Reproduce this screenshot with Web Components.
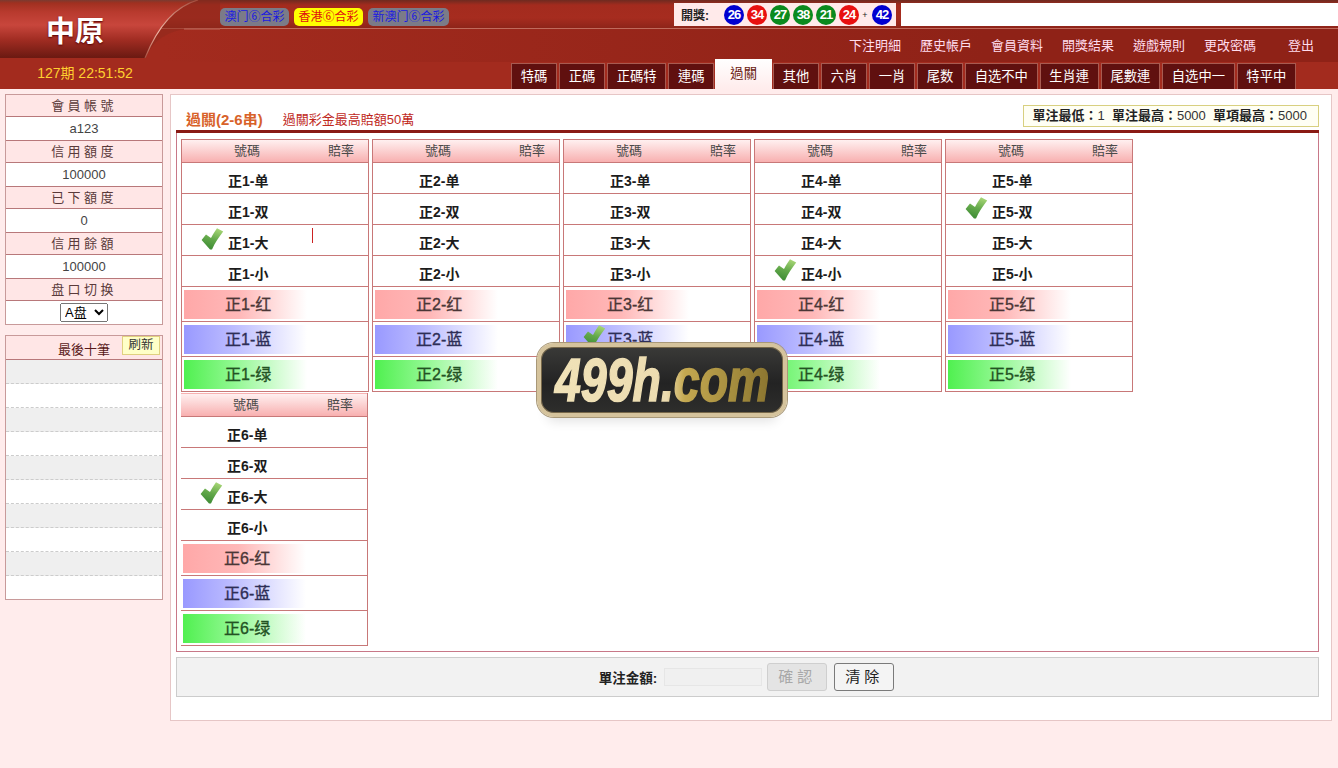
<!DOCTYPE html>
<html lang="zh-Hant"><head><meta charset="utf-8"><title>過關</title>
<style>
html,body{margin:0;padding:0;background:#ffecec;font-family:"Liberation Sans","Noto Sans CJK TC","Noto Sans CJK SC",sans-serif;font-size:13px;color:#333}
body{width:1338px;height:768px;overflow:hidden;position:relative}
</style></head><body>
<app-header></app-header>
<div style="display:flex;padding:5px 0 0 5px;gap:7px;align-items:flex-start">
<side-bar></side-bar>
<main-panel></main-panel>
</div>
<logo-mark></logo-mark>
<script>
const FONT='"Liberation Sans","Noto Sans CJK TC","Noto Sans CJK SC",sans-serif';
function el(name,html){customElements.define(name,class extends HTMLElement{constructor(){super();this.attachShadow({mode:'open'}).innerHTML=typeof html==='function'?html(this):html;}});}

el('lottery-pill',`<style>:host{display:block;height:18px;line-height:18px;padding:0 4.5px;border-radius:5px;background:#7b7b88;color:#1a1ae0;font-size:12px;white-space:nowrap}
:host([on]){background:#ffff00;color:#e01010}</style><slot></slot>`);

el('num-ball',`<style>:host{display:block;width:20px;height:20px;margin-right:3px;border-radius:50%;background:#0000d0;color:#fff;font:bold 13px/20px ${FONT};letter-spacing:-1px;text-align:center;flex:none}
:host([c=r]){background:#e81010}:host([c=g]){background:#0a8a1e}</style><slot></slot>`);

el('tab-item',`<style>:host{display:block;height:26px;line-height:27px;margin-top:1px;padding:0 9.7px;background:#60100f;color:#fff;font-size:13.3px;white-space:nowrap;box-shadow:inset 1px 0 0 #a85a50,inset -1px 0 0 #a85a50,inset 0 1px 0 #a85a50}
:host([on]){height:30px;margin:-3px -1px 0;line-height:30px;background:linear-gradient(#fff,#ffecec);color:#6a1a10;padding:0 15.2px;box-shadow:none}</style><slot></slot>`);

el('app-header',`<style>
:host{display:block;height:89px;position:relative;background:#a32b1e;color:#fff}
.wrap{display:flex;height:89px}
.left{width:160px;flex:none;position:relative}
.brand{height:58px;width:146px;background:linear-gradient(#7a3a30 0,#a03020 3px,#b83a2e 12px,#c8463c 25px,#a02c22 40px,#6d1a12 57px);display:flex;align-items:center;justify-content:center;box-sizing:border-box;font:bold 29px "Noto Sans CJK TC",sans-serif;text-shadow:0 1px 2px #500;padding:0 0 1px 4px}
.time{height:31px;line-height:31px;text-align:center;color:#ffd030;font-size:14px;width:170px}
.swoosh{position:absolute;left:140px;top:0;width:80px;height:58px}
.right{flex:1;min-width:0;display:flex;flex-direction:column}
.top{height:29px;box-sizing:border-box;padding-top:8px;display:flex;background:linear-gradient(#6e2a20,#a32b1e 5px,#a62c1f 18px,#8e2419);border-bottom:1px solid #c06a5c;position:relative}
.pills{display:flex;gap:5px;margin-left:60px;position:relative}
.draw{position:absolute;left:514px;top:3px;width:222px;height:23px;background:#ffeaea;display:flex;align-items:center;box-sizing:border-box;padding-left:7px;color:#222;font-weight:bold;font-size:12px}
.draw span{width:43px;white-space:nowrap;flex:none}
.draw i{font:normal 9px sans-serif;margin:0 3px 0 -1px;width:8px;text-align:center;flex:none}
.search{position:absolute;left:741px;right:0;top:3px;height:23px;background:#fff}
.links{height:33px;box-sizing:border-box;display:flex;justify-content:flex-end;align-items:center;padding:0 24px 2px 0;gap:19px;font-size:13px;background:linear-gradient(90deg,#a32b1e,#8f2217 70%,#8f2217);color:#fde}
.links span:last-child{margin-left:13px}
.tabs{height:27px;display:flex;gap:2px;padding-left:351px;align-items:flex-start}
</style>
<div class="wrap">
 <div class="left">
  <div class="brand">中原</div>
  <div class="time">127期 22:51:52</div>
 </div>
 <div class="right">
  <div class="top">
   <div class="pills"><lottery-pill>澳门⑥合彩</lottery-pill><lottery-pill on>香港⑥合彩</lottery-pill><lottery-pill>新澳门⑥合彩</lottery-pill></div>
   <div class="draw"><span>開獎:</span>
    <num-ball>26</num-ball><num-ball c=r>34</num-ball><num-ball c=g>27</num-ball><num-ball c=g>38</num-ball><num-ball c=g>21</num-ball><num-ball c=r>24</num-ball><i>+</i><num-ball>42</num-ball></div>
   <div class="search"></div>
  </div>
  <div class="links"><span>下注明細</span><span>歷史帳戶</span><span>會員資料</span><span>開獎結果</span><span>遊戲規則</span><span>更改密碼</span><span>登出</span></div>
  <div class="tabs"><tab-item>特碼</tab-item><tab-item>正碼</tab-item><tab-item>正碼特</tab-item><tab-item>連碼</tab-item><tab-item on>過關</tab-item><tab-item>其他</tab-item><tab-item>六肖</tab-item><tab-item>一肖</tab-item><tab-item>尾数</tab-item><tab-item>自选不中</tab-item><tab-item>生肖連</tab-item><tab-item>尾數連</tab-item><tab-item>自选中一</tab-item><tab-item>特平中</tab-item></div>
 </div>
</div>
<svg class="swoosh" viewBox="0 0 80 58"><defs>
<linearGradient id="b" x1="0" y1="0" x2="0" y2="1"><stop offset="0" stop-color="#7a3a30"/><stop offset=".05" stop-color="#a03020"/><stop offset=".21" stop-color="#b83a2e"/><stop offset=".43" stop-color="#c8463c"/><stop offset=".7" stop-color="#a02c22"/><stop offset="1" stop-color="#6d1a12"/></linearGradient>
<linearGradient id="l" x1="0" y1="1" x2="1" y2="0"><stop offset="0" stop-color="#a85040"/><stop offset=".35" stop-color="#f0b8a8"/><stop offset="1" stop-color="#a0493a"/></linearGradient></defs>
<path d="M5 58C11 46 22 31 48 29H80V0H50C32 6 18 26 5 58Z" fill="#8f2a1e" opacity=".55"/>
<path d="M0 0H58C36 6 18 26 5 58H0Z" fill="url(#b)"/>
<path d="M5 58C18 26 36 6 58 0" fill="none" stroke="url(#l)" stroke-width="1.2"/>
<path d="M44 29H80" stroke="#c06a5c" stroke-width="1"/></svg>`);

el('info-row',h=>`<style>:host{display:block}.k{height:21px;line-height:22px;text-align:center;background:#ffe6e6;color:#5a3a3a;letter-spacing:3.4px;font-size:13px;border-bottom:1px solid #b8787a}
.v{height:23px;line-height:23px;text-align:center;background:#fff;color:#444;font-size:13px;border-bottom:1px solid #b8787a}:host(:last-child) .v{border-bottom:0}</style>
<div class="k">${h.getAttribute('k')}</div><div class="v"><slot></slot></div>`);

el('side-bar',`<style>:host{display:block;width:158px;flex:none}
.box{border:1px solid #c89a9a;background:#fff}
.recent{margin-top:10px}
.rh{height:23px;line-height:27px;background:#ffe6e6;border-bottom:1px solid #b8787a;text-align:center;position:relative;color:#5a1a1a;font-size:13px;padding-right:0}
.rb{position:absolute;right:2px;top:0;height:19px;width:38px;box-sizing:border-box;line-height:17px;font-size:12.5px;background:#ffffc8;border:1px solid #e0d080;color:#333}
.r{height:23px;border-bottom:1px dashed #ccc}.r:nth-child(odd){background:#efefef}.r:last-child{border-bottom:0}
select{font:13px ${FONT};height:19px;width:48px;padding:0;display:block;margin:0 auto;position:relative;top:2px}
</style>
<div class="box">
<info-row k="會員帳號">a123</info-row><info-row k="信用額度">100000</info-row><info-row k="已下額度">0</info-row><info-row k="信用餘額">100000</info-row><info-row k="盘口切换"><select><option>A盘</option></select></info-row>
</div>
<div class="box recent"><div class="rh">最後十筆<span class="rb">刷新</span></div><div>
<div class="r"></div><div class="r"></div><div class="r"></div><div class="r"></div><div class="r"></div><div class="r"></div><div class="r"></div><div class="r"></div><div class="r"></div><div class="r"></div></div></div>`);

el('check-mark',`<style>:host{display:block;position:absolute;width:24px;height:22px}svg{display:block}</style>
<svg width="24" height="22" viewBox="0 0 24 22"><defs><linearGradient id="g" x1=".6" y1="0" x2=".3" y2="1"><stop offset="0" stop-color="#a4d474"/><stop offset=".5" stop-color="#62a84a"/><stop offset="1" stop-color="#3c8a34"/></linearGradient></defs><path d="M.6 12 5 6.5 10 10C12 6.5 14 3 16 .3L22.2 3.6C18 9 14 15 11 21.5H9Z" fill="url(#g)"/></svg>`);

el('bet-row',h=>{const t=h.getAttribute('t');return `<style>:host{display:block;position:relative;height:30px;border-bottom:1px solid #c87878;background:#fff}
.n{position:absolute;left:46px;top:0;font:bold 14px/36px ${FONT};color:#1c1c1c;white-space:nowrap}
check-mark{left:19px;top:3px}
:host([c]){height:34px}
:host([c]) .bar{position:absolute;left:2px;top:3px;bottom:2px;width:123px}
:host([c=r]) .bar{background:linear-gradient(90deg,#ffa8a8,#ffb8b8 45%,#fff)}
:host([c=b]) .bar{background:linear-gradient(90deg,#9999ff,#bcbcff 40%,#fff)}
:host([c=g]) .bar{background:linear-gradient(90deg,#50f050,#90f890 40%,#fff)}
:host([c]) .n{left:43px;font-size:16px;font-weight:400;-webkit-text-stroke:.35px currentColor;line-height:35px;color:#4a3636}
:host([c=b]) .n{color:#2e2e56}:host([c=g]) .n{color:#235223}
.tick{position:absolute;left:130px;top:3px;width:1px;height:15px;background:#c22}
</style><div class="bar"></div><span class="n">${t}</span>${h.hasAttribute('k')?'<check-mark></check-mark>':''}${h.hasAttribute('tick')?'<i class="tick"></i>':''}`});

el('bet-table',h=>{const n=h.getAttribute('n'),k=h.getAttribute('k');
const row=(s,a='')=>`<bet-row t="正${n}-${s}" ${k===s?'k':''} ${a}></bet-row>`;
return `<style>:host{display:block;box-sizing:border-box;border:1px solid #c87878;border-width:0 1px 0 1px;background:#fff}
:host([open]){border-left:0}
.h{height:24px;display:flex;align-items:center;background:linear-gradient(#fff0f0,#f8b0b0);color:#4a4a4a;font-size:13px;border:solid #c87878;border-width:1px 0;box-sizing:border-box;position:relative;padding-bottom:4px}
:host([open]) .h{border-top-color:transparent}
.h b{font-weight:400;position:absolute;left:52px}.h u{text-decoration:none;position:absolute;right:14px}</style>
<div class="h"><b>號碼</b><u>賠率</u></div>
${row('单')}${row('双')}${row('大',h.hasAttribute('tick')?'tick':'')}${row('小')}${row('红','c=r')}${row('蓝','c=b')}${row('绿','c=g')}`});

el('main-panel',`<style>:host{display:block;width:1162px;height:627px;flex:none;box-sizing:border-box;background:#fff;border:1px solid #e6c6c6;padding:0 12px 0 5px}
.head{height:38px;box-sizing:border-box;display:flex;align-items:flex-end;border-bottom:3px solid #8a1a14;position:relative;padding:0 0 0 10px}
.head>b{font-size:15px;color:#d8622a;margin-right:20px;line-height:20px}.head>span{font-size:13px;color:#c0281c;line-height:20px}
.lim{position:absolute;right:0;top:10px;height:22px;line-height:20px;border:1px solid #d8d080;background:#fffff4;box-sizing:border-box;padding:0 11px 0 8px;font-size:13px;color:#333;white-space:nowrap}
.lim b{font-weight:700;color:#222}
.grid{height:519px;box-sizing:border-box;border:1px solid #c87888;border-top:0;padding-left:4px;padding-top:6px;display:flex;flex-wrap:wrap;align-content:flex-start;gap:0 3px}
.bar{margin-top:5px;height:40px;box-sizing:border-box;background:#f2f2f2;border:1px solid #ccc;display:flex;align-items:center;justify-content:center;font-size:13.5px;padding-right:2px}
.bar b{margin-right:7px;color:#222}
.in{width:98px;height:18px;box-sizing:border-box;border:1px solid #e6e6e6;background:#f0f0f0;margin-right:5px}
.btn{width:60px;height:28px;line-height:26px;box-sizing:border-box;text-align:center;border-radius:3px;font-size:15px;letter-spacing:4px;border:1px solid #7a7a7a;color:#222;background:#f4f4f4;margin-right:7px}
.btn:last-child{margin-right:0}
.btn.off{color:#a8a8a8;border-color:#cfcfcf;background:#e4e4e4}
</style>
<div class="head"><b>過關(2-6串)</b><span>過關彩金最高賠額50萬</span>
<div class="lim"><b>單注最低：</b>1&nbsp;&nbsp;<b>單注最高：</b>5000&nbsp;&nbsp;<b>單項最高：</b>5000</div></div>
<div class="grid">
<bet-table n="1" k="大" tick style="width:188px"></bet-table>
<bet-table n="2" style="width:188px"></bet-table>
<bet-table n="3" k="蓝" style="width:188px"></bet-table>
<bet-table n="4" k="小" style="width:188px"></bet-table>
<bet-table n="5" k="双" style="width:188px"></bet-table>
<bet-table n="6" k="大" open style="width:187px;margin-top:1px"></bet-table>
</div>
<div class="bar"><b>單注金額:</b><span class="in"></span><span class="btn off">確認</span><span class="btn">清除</span></div>`);

el('logo-mark',`<style>:host{display:flex;position:absolute;left:537px;top:343px;width:250px;height:74px;box-sizing:border-box;border-radius:17px;border:4px solid #d5c39c;background:linear-gradient(#3a3a38,#232323 55%,#2e2e2c);box-shadow:inset 0 0 0 1px #77684a,0 0 0 1px #a89878,0 14px 12px -10px rgba(0,0,0,.12);align-items:center;justify-content:center}
span{display:inline-block;font:italic 900 56px/66px "Liberation Sans",sans-serif;-webkit-text-stroke:1.6px transparent;background:linear-gradient(90deg,#f0e2b8 0,#ecdcb0 52%,#c4a850 60%,#a89040 80%,#88722e 100%);-webkit-background-clip:text;background-clip:text;color:transparent;transform:scale(.83,1.08);padding:0 6px;white-space:nowrap}</style><span>499h.com</span>`);
</script>
</body></html>
